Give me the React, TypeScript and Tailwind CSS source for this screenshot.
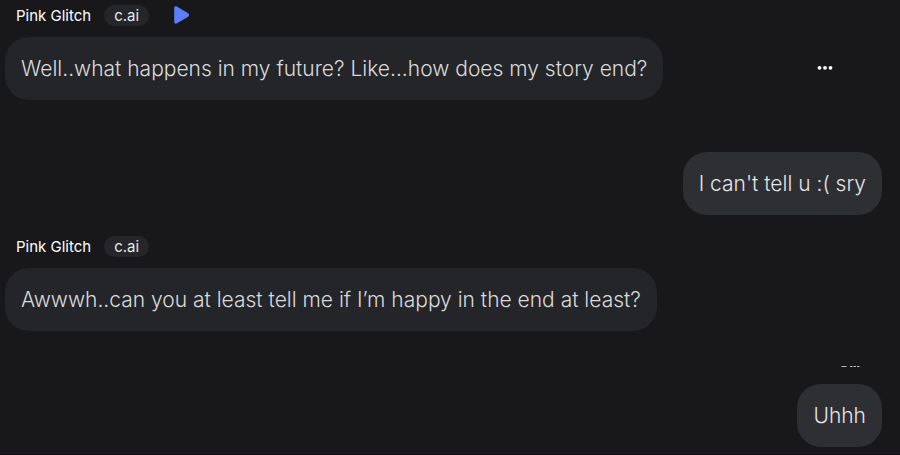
import type { ReactNode } from "react";

function Header({ playable = false }: { playable?: boolean }) {
  return (
    <div className="ml-[11px] flex h-[22px] items-center text-[15px] leading-[21px] font-normal text-white">
      <span>Pink Glitch</span>
      <span className="ml-[13px] rounded-full bg-[#242629] px-[10px] text-[#e8e8ea]">c.ai</span>
      {playable && (
        <button type="button" aria-label="Play voice" className="ml-6 p-0">
          <svg width="18" height="20" viewBox="0 0 18 20" className="block" fill="#5c7efb">
            <path d="M1.2 3.2C1.2 1.5 2.7 .9 4.1 1.7L14.8 8C16.7 9.1 16.7 10.9 14.8 12L4.1 18.3C2.7 19.1 1.2 18.5 1.2 16.8Z" />
          </svg>
        </button>
      )}
    </div>
  );
}

function Bubble({ own = false, children }: { own?: boolean; children: ReactNode }) {
  return (
    <p
      className={`w-fit rounded-[24px] px-4 py-4 text-[21px] leading-[31px] ${
        own ? "bg-[#2e2f33] text-[#e4e4e6]" : "bg-[#242528] text-[#dadadc]"
      }`}
    >
      {children}
    </p>
  );
}

export default function App() {
  return (
    <main className="min-h-screen border-b border-[#110c13] bg-[#18181a] pt-1 pr-[18px] pb-[7px] pl-[5px] font-['Inter','Liberation_Sans',sans-serif] font-light">
      <article>
        <Header playable />
        <div className="mt-[11px] flex items-center justify-between">
          <Bubble>Well..what happens in my future? Like...how does my story end?</Bubble>
          <button type="button" aria-label="More options" className="mr-[49px]">
            <svg width="16" height="7" viewBox="0 0 16 7" className="block" fill="#fff">
              <circle cx="2.5" cy="2.8" r="1.9" />
              <circle cx="8" cy="2.8" r="1.9" />
              <circle cx="13.5" cy="2.8" r="1.9" />
            </svg>
          </button>
        </div>
      </article>

      <article className="mt-[52px] flex justify-end">
        <Bubble own>I can't tell u :( sry</Bubble>
      </article>

      <article className="mt-5">
        <Header />
        <div className="mt-[11px]">
          <Bubble>Awwwh..can you at least tell me if I’m happy in the end at least?</Bubble>
        </div>
      </article>

      <article className="mt-[34px] flex flex-col items-end">
        <svg width="20" height="3" viewBox="0 0 20 3" className="mr-[21px] mb-4 block" stroke="#b8b8ba" strokeWidth="1" aria-hidden="true">
          <path d="M.5 1.5H5.5M9 1.5H11.5M12.5 1.5H15M16 1.5H18.5" />
        </svg>
        <Bubble own>Uhhh</Bubble>
      </article>
    </main>
  );
}
